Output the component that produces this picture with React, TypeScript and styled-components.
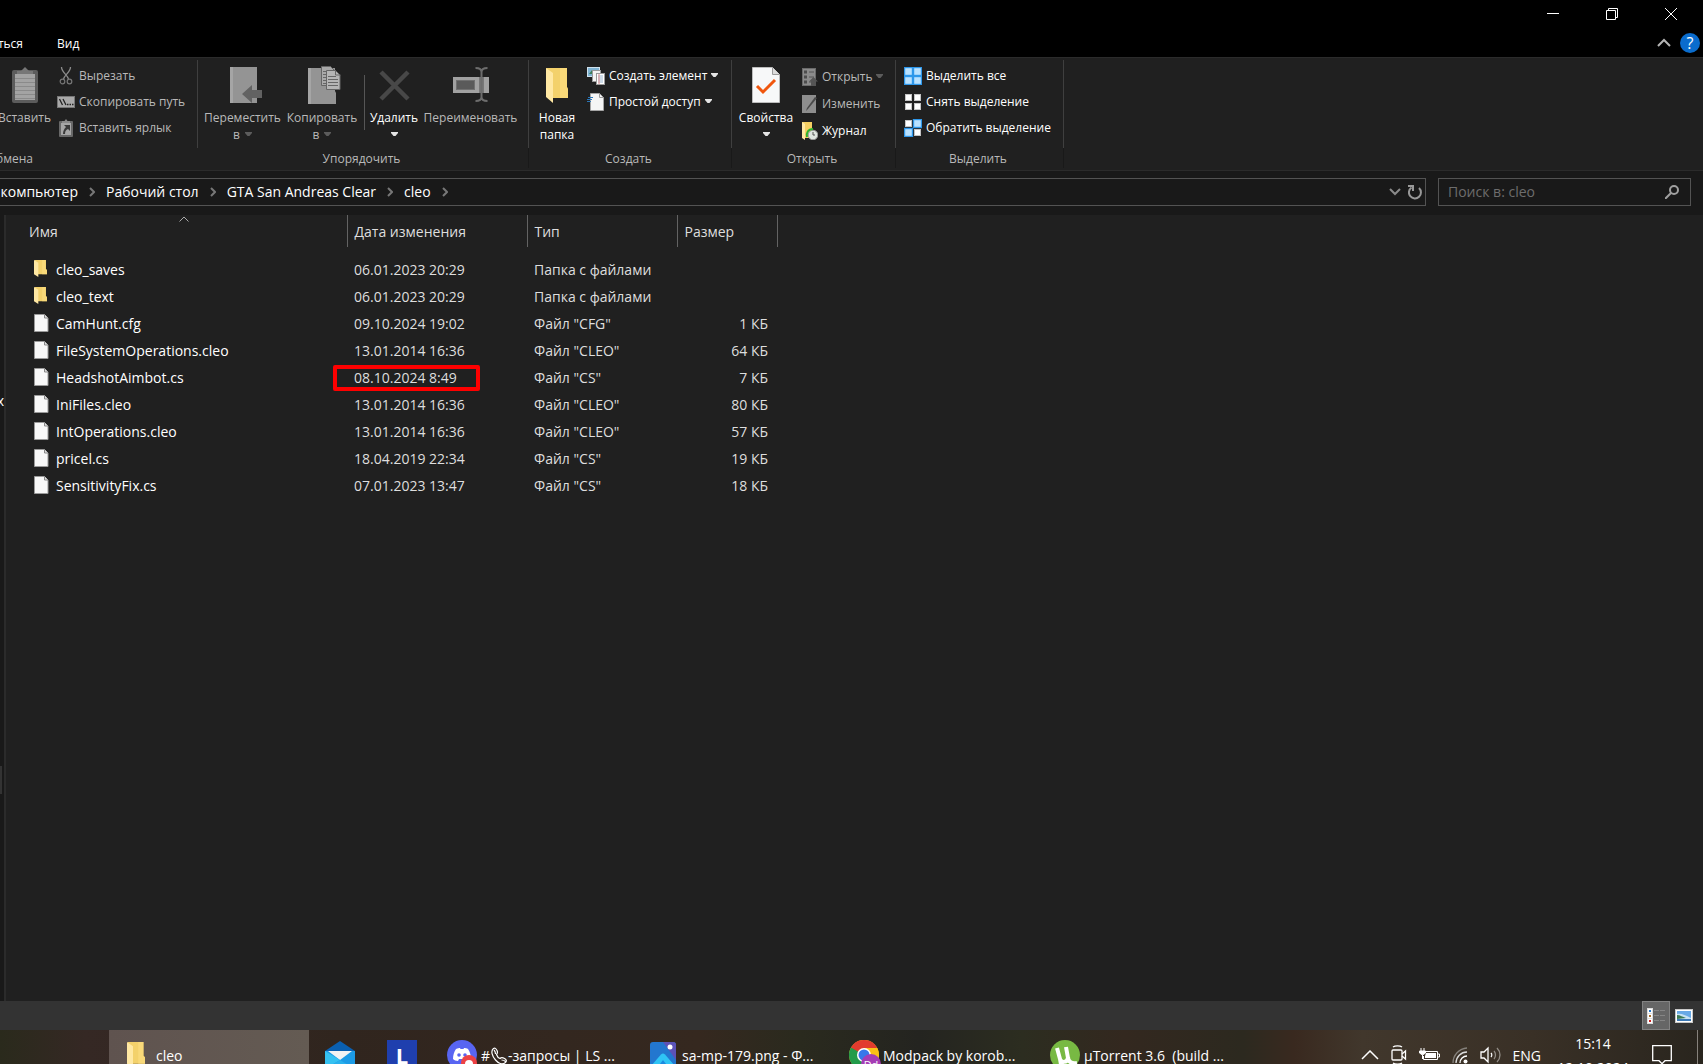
import React from 'react';
import styled, { createGlobalStyle, css } from 'styled-components';

const Global = createGlobalStyle`
  * { box-sizing: border-box; }
  html, body { margin: 0; height: 100%; background: #000; overflow: hidden; }
  body { font-family: "Open Sans", "Noto Sans", sans-serif; font-size: 14px; line-height: 20px; color: #fff; }
  button, input { font: inherit; color: inherit; background: none; border: 0; padding: 0; margin: 0; }
  button { cursor: default; white-space: nowrap; }
  svg { display: block; flex: none; }
`;

const Shell = styled.div`
  display: flex;
  flex-direction: column;
  height: 100vh;
`;

/* ---------- title bar and tabs ---------- */

const TitleBar = styled.header`
  display: flex;
  justify-content: space-between;
  flex: none;
  height: 57px;
  background: #000;
`;

const Tabs = styled.nav`
  display: flex;
  align-items: flex-end;
  gap: 34px;
  padding-bottom: 3px;
`;

const Tab = styled.button<{ $clipped?: boolean }>`
  height: 20px;
  font-size: 12px;
  ${p => p.$clipped && css`
    display: flex;
    justify-content: flex-end;
    width: 23px;
    overflow: hidden;
  `}
`;

const WindowControls = styled.div`
  display: flex;
  flex-direction: column;
  align-items: flex-end;
`;

const ControlRow = styled.div`
  display: flex;
  padding-right: 3px;
`;

const WindowButton = styled.button`
  display: grid;
  place-items: center;
  width: 59px;
  height: 28px;
`;

const HelpRow = styled.div`
  display: flex;
  align-items: center;
  gap: 9px;
  height: 30px;
  padding-right: 3px;
`;

/* ---------- ribbon ---------- */

const Ribbon = styled.section`
  display: flex;
  flex: none;
  height: 114px;
  background: #202020;
  border-top: 1px solid #2b2b2b;
  border-bottom: 1px solid #2b2b2b;
`;

const Group = styled.div<{ $width: number }>`
  display: flex;
  flex-direction: column;
  flex: none;
  width: ${p => p.$width}px;
  margin: 2px 0;
`;

const GroupBody = styled.div<{ $start: number }>`
  display: flex;
  align-items: flex-start;
  height: 89px;
  padding-left: ${p => p.$start}px;
  border-right: 1px solid #3f3f3f;
`;

const GroupLabel = styled.div`
  padding: 2px 3px 0 0;
  border-right: 1px solid #191919;
  font-size: 12px;
  line-height: 18px;
  color: #b9b9b9;
  text-align: center;
`;

const ClippedLabel = styled.div`
  display: flex;
  justify-content: flex-end;
  width: 33px;
  padding-top: 2px;
  overflow: hidden;
  font-size: 12px;
  line-height: 18px;
  color: #b9b9b9;
`;

const LargeButton = styled.button<{ $width: number; $dim?: boolean }>`
  display: flex;
  flex-direction: column;
  align-items: center;
  flex: none;
  width: ${p => p.$width}px;
  padding-top: 6px;
  font-size: 12px;
  line-height: 17px;
  color: ${p => (p.$dim ? '#b9b9b9' : '#fff')};
  & > svg:first-child { margin-bottom: 5px; }
`;

const SecondLine = styled.span`
  display: flex;
  align-items: center;
  gap: 5px;
  height: 17px;
`;

const SmallStack = styled.div<{ $start?: number; $top?: number; $gap?: number }>`
  display: flex;
  flex-direction: column;
  gap: ${p => p.$gap ?? 6}px;
  padding: ${p => p.$top ?? 6}px 0 0 ${p => p.$start ?? 0}px;
`;

const SmallButton = styled.button<{ $dim?: boolean }>`
  display: flex;
  align-items: center;
  gap: 4px;
  height: 20px;
  font-size: 12px;
  color: ${p => (p.$dim ? '#b9b9b9' : '#fff')};
`;

const Divider = styled.div`
  width: 1px;
  height: 55px;
  margin: 15px 3px 0 3px;
  background: #565656;
`;

/* ---------- address bar ---------- */

const AddressRow = styled.div`
  display: flex;
  flex: none;
  gap: 12px;
  height: 44px;
  padding: 7px 12px 9px 0;
  background: #191919;
`;

const AddressBox = styled.div`
  display: flex;
  align-items: center;
  flex: 1;
  min-width: 0;
  border: 1px solid #535353;
  border-left: 0;
`;

const Crumbs = styled.nav`
  display: flex;
  align-items: center;
  flex: 1;
  gap: 11px;
  padding-bottom: 1px;
  overflow: hidden;
`;

const Crumb = styled.button`
  height: 20px;
`;

const ClippedCrumb = styled(Crumb)`
  display: flex;
  justify-content: flex-end;
  width: 78px;
  overflow: hidden;
`;

const AddressButton = styled.button`
  display: grid;
  place-items: center;
  width: 20px;
  height: 26px;
`;

const SearchBox = styled.label`
  display: flex;
  align-items: center;
  width: 253px;
  padding: 0 11px 0 9px;
  border: 1px solid #535353;
`;

const SearchInput = styled.input`
  flex: 1;
  min-width: 0;
  outline: 0;
  &::placeholder { color: #6d6d6d; opacity: 1; }
`;

/* ---------- file list ---------- */

const Content = styled.main`
  display: flex;
  flex: 1;
  min-height: 0;
  background: #202020;
`;

const NavPane = styled.aside`
  display: flex;
  flex-direction: column;
  justify-content: space-between;
  flex: none;
  width: 6px;
  padding: 176px 0 207px;
  background: #191919;
  border-right: 2px solid #2b2b2b;
`;

const NavItem = styled.div`
  display: flex;
  justify-content: flex-end;
  width: 4px;
  overflow: hidden;
`;

const NavThumb = styled.div`
  width: 2px;
  height: 28px;
  background: #333;
`;

const FileTable = styled.table`
  table-layout: fixed;
  align-self: flex-start;
  width: 771px;
  border-collapse: collapse;
`;

const HeadCell = styled.th<{ $width: number; $pad?: number }>`
  position: relative;
  width: ${p => p.$width}px;
  height: 32px;
  padding: 2px 0 0 ${p => p.$pad ?? 7}px;
  border-right: 1px solid #636363;
  color: #dedede;
  font-weight: 400;
  text-align: left;
`;

const SortMark = styled.span`
  position: absolute;
  top: 1px;
  left: 173px;
`;

const Spacer = styled.tr`
  height: 9px;
`;

const Cell = styled.td<{ $right?: boolean }>`
  position: relative;
  height: 27px;
  padding: 0 ${p => (p.$right ? 9 : 0)}px 0 7px;
  color: #dedede;
  text-align: ${p => (p.$right ? 'right' : 'left')};
  white-space: nowrap;
`;

const NameCell = styled(Cell)`
  padding-left: 28px;
  color: #fff;
`;

const FileName = styled.div`
  display: flex;
  align-items: center;
`;

const IconSlot = styled.span`
  width: 22px;
  padding-bottom: 2px;
`;

const Highlight = styled.span`
  position: absolute;
  top: 1px;
  left: -14px;
  width: 147px;
  height: 26px;
  border: 4px solid #fe0000;
  border-radius: 2px;
`;

/* ---------- status bar ---------- */

const StatusBar = styled.footer`
  display: flex;
  justify-content: flex-end;
  flex: none;
  height: 29px;
  padding-right: 5px;
  background: #333;
`;

const ViewButton = styled.button<{ $active?: boolean }>`
  display: grid;
  place-items: center;
  width: 28px;
  height: 29px;
  ${p => p.$active && css`
    background: #666;
    border: 1px solid #838383;
  `}
`;

/* ---------- taskbar ---------- */

const TaskbarClip = styled.div`
  flex: none;
  height: 34px;
  overflow: hidden;
`;

const Taskbar = styled.div`
  display: flex;
  height: 50px;
  background: linear-gradient(90deg, #2a2a1c 0%, #352824 5%, #30251e 20%, #33271f 33%, #35281f 41%, #2a2a1e 47%, #242420 54%, #2c2d20 60%, #33281f 66%, #2c291f 73%, #39291f 76%, #41372c 80%, #393026 90%, #29251e 100%);
`;

const Task = styled.button<{ $width: number; $gap?: number; $start: number; $active?: boolean }>`
  display: flex;
  align-items: center;
  flex: none;
  gap: ${p => p.$gap ?? 4}px;
  width: ${p => p.$width}px;
  padding-left: ${p => p.$start}px;
  background: ${p => (p.$active ? 'linear-gradient(90deg, #5f534f, #645b53)' : 'none')};
`;

const TaskLabel = styled.span`
  display: flex;
  align-items: center;
  padding-top: 2px;
`;

const Tasks = styled.nav`
  display: flex;
  flex: 1;
  min-width: 0;
  padding-left: 109px;
`;

const Tray = styled.div`
  display: flex;
  align-items: center;
  flex: none;
  gap: 12px;
`;

const Clock = styled.time`
  display: flex;
  flex-direction: column;
  align-items: center;
  width: 80px;
  margin-right: 7px;
  padding-top: 1px;
  line-height: 24px;
`;

const ShowDesktop = styled.button`
  width: 6px;
  height: 50px;
  margin-left: 13px;
  border-left: 1px solid #87827c;
`;

/* ---------- icons ---------- */

const Caret = ({ dim }: { dim?: boolean }) => (
  <svg width="7" height="6" viewBox="0 0 7 6"><path d="M0 0h7v1L4.500 4h-2L0 1z" fill={dim ? '#5c5c5c' : '#e4e4e4'} /></svg>
);

const Paste = () => (
  <svg width="28" height="38" viewBox="0 0 28 38">
    <rect x="1" y="4" width="26" height="33" rx="2" fill="#5c5c5c" />
    <rect x="4" y="8" width="20" height="26" fill="#a3a3a3" />
    <path d="M4 12.500h20M4 16.500h20M4 20.500h20M4 24.500h20M4 28.500h20M4 32.500h20" stroke="#8a8a8a" />
    <path d="M6 8V5h4l4-4 4 4h4v3z" fill="#777" />
  </svg>
);

const Scissors = () => (
  <svg width="18" height="18" viewBox="0 0 18 18" fill="none" stroke="#777">
    <path d="M4.500 0c0 5 6 8 7 12M13.500 0c0 5-6 8-7 12" stroke="#8b8b8b" strokeWidth="1.300" />
    <circle cx="5.500" cy="14.500" r="2.300" strokeWidth="1.200" /><circle cx="12.500" cy="14.500" r="2.300" strokeWidth="1.200" />
  </svg>
);

const CopyPath = () => (
  <svg width="18" height="18" viewBox="0 0 18 18">
    <rect x="0.500" y="3.500" width="17" height="11" fill="#a9a9a9" stroke="#777" />
    <path d="M2.500 6l3 6M6 6l3 6M10 11.500h1.500M12.500 11.500H14M15 11.500h1.500" stroke="#222" strokeWidth="1.300" />
  </svg>
);

const PasteLink = () => (
  <svg width="18" height="18" viewBox="0 0 18 18">
    <rect x="2" y="2" width="14" height="16" rx="1" fill="#686868" />
    <rect x="4" y="4" width="10" height="12" fill="#a6a6a6" />
    <path d="M5 4V2h2.500L9 0l1.500 2H13v2z" fill="#8a8a8a" />
    <path d="M7 6h6v6l-2-2c-2 1-3 2-3 5H6c0-3 1-5 3-7z" fill="#3a3a3a" />
  </svg>
);

const MoveTo = () => (
  <svg width="40" height="38" viewBox="-6 0 40 38">
    <path d="M1 1h27v36H1z" fill="#949494" /><path d="M1 1h3v36H1z" fill="#a5a5a5" />
    <path d="M13 28l10-9v5h10v8H23v5z" fill="#626262" />
  </svg>
);

const CopyTo = () => (
  <svg width="38" height="38" viewBox="-4 0 38 38">
    <path d="M1 2h27v23l1 2v11H1z" fill="#949494" /><path d="M1 2h3v36H1z" fill="#a5a5a5" />
    <path d="M14.500.500h9l4 4v15h-13z" fill="#a9a9a9" stroke="#666" />
    <path d="M16 5.500h7M16 8.500h4M16 11.500h4M16 14.500h4M16 17.500h4" stroke="#666" />
    <path d="M19.500 4.500h9l4.500 4.500v14.500H19.500z" fill="#b5b5b5" stroke="#666" />
    <path d="M28.500 4v5h5M21 10.500h8M21 13.500h10M21 16.500h10M21 19.500h10" fill="none" stroke="#666" />
  </svg>
);

const DeleteX = () => (
  <svg width="34" height="38" viewBox="0 0 34 38">
    <path d="M4 6l27 27M31 6L4 33" stroke="#484848" strokeWidth="4.500" />
  </svg>
);

const Rename = () => (
  <svg width="38" height="38" viewBox="0 0 38 38">
    <rect x="1" y="11" width="36" height="16" fill="#a1a1a1" />
    <rect x="4.500" y="14.500" width="18" height="9" fill="#5a5a5a" stroke="#707070" />
    <path d="M27 11h5v16h-5z" fill="#777" /><path d="M29.500 5v28M23.500 2c4 0 6 1 6 4 0-3 2-4 6-4M23.500 35c4 0 6-1 6-4 0 3 2 4 6 4" fill="none" stroke="#6d6d6d" strokeWidth="2" />
  </svg>
);

const FolderIcon = ({ w, h }: { w: number; h: number }) => (
  <svg width={w} height={h} viewBox="0 0 24 36" preserveAspectRatio="none">
    <path d="M1 0h21v19l2 2v9H7z" fill="#f3d16b" />
    <path d="M15 0h7v19l2 2v9h-9z" fill="#fbdd7f" opacity=".7" />
    <path d="M0 0l8 6v30l-8-6z" fill="#ffe8a3" />
  </svg>
);

const NewFolder = () => (
  <svg width="24" height="38" viewBox="0 0 24 38">
    <path d="M1 2h21v19l1 2v9H8z" fill="#f3d16b" />
    <path d="M15 2h7v19l1 2v9h-8z" fill="#fbdd7f" opacity=".7" />
    <path d="M1 2l7 5v30l-7-6z" fill="#ffe8a3" />
  </svg>
);

const NewItem = () => (
  <svg width="18" height="18" viewBox="0 0 18 18">
    <rect x="0.500" y="0.500" width="12" height="9" fill="#7fb3d3" stroke="#d0e2ee" />
    <path d="M2 7l3-4 3 4z" fill="#3e7e5a" />
    <rect x="5.500" y="3.500" width="8" height="11" fill="#f4f4f4" stroke="#999" />
    <rect x="9.500" y="6.500" width="8" height="11" fill="#fff" stroke="#999" />
    <path d="M11 9h5M11 11h5M11 13h5M11 15h5" stroke="#9bb7cf" /><path d="M12 7v10" stroke="#d88" />
  </svg>
);

const EasyAccess = () => (
  <svg width="18" height="18" viewBox="0 0 18 18">
    <path d="M3.500.500h9l4 4v13h-13z" fill="#f5f5f5" stroke="#a5a5a5" />
    <path d="M12.500.500v4h4" fill="none" stroke="#999" />
    <path d="M1 4.500h5M0 6.500h5M0 8.500h4" stroke="#2a76b8" />
  </svg>
);

const Properties = () => (
  <svg width="28" height="38" viewBox="0 0 28 38">
    <path d="M.500 1.500h20l7 7v28H.500z" fill="#f7f8f9" stroke="#bcbcbc" />
    <path d="M20.500 1.500v7h7" fill="#dcdcdc" stroke="#999" />
    <path d="M5 20l6 6 12-12" fill="none" stroke="#f0560e" strokeWidth="3" />
  </svg>
);

const OpenIcon = () => (
  <svg width="16" height="18" viewBox="0 0 16 18">
    <rect x="0.500" y="0.500" width="13" height="17" fill="#8b8b8b" stroke="#6a6a6a" />
    <path d="M2 2.500h3v3H2zM2 7.500h3v3H2zM2 12.500h3v3H2z" fill="#4d4d4d" />
    <path d="M7 4h5M7 9h5M7 14h3" stroke="#555" />
    <path d="M11.500 9l4.500 4.500h-2V18H9v-4.500H7z" fill="#555" />
  </svg>
);

const EditIcon = () => (
  <svg width="16" height="18" viewBox="0 0 16 18">
    <path d="M0 0h14v18H0z" fill="#8e8e8e" /><path d="M15 3L6 14l-2 2 1-3 8-11z" fill="#4a4a4a" />
  </svg>
);

const HistoryIcon = () => (
  <svg width="16" height="18" viewBox="0 0 16 18">
    <path d="M0 0h10v16H3z" fill="#f5cf62" /><path d="M0 0l3 2v16l-3-2z" fill="#ffe8a3" />
    <circle cx="11" cy="13" r="4.800" fill="#dfe5df" stroke="#999" />
    <path d="M11 10v3h2" fill="none" stroke="#555" /><path d="M5 15c-1-4 1-8 6-8" fill="none" stroke="#2eb32e" strokeWidth="2" />
  </svg>
);

const SelectGrid = ({ on }: { on: number[] }) => (
  <svg width="18" height="18" viewBox="0 0 18 18">
    {[[0, 0], [9, 0], [0, 9], [9, 9]].map(([x, y], i) => (
      on.includes(i)
        ? <rect key={i} x={x + 0.5} y={y + 0.5} width="8" height="8" fill="#b8e1ff" stroke="#2e97ea" strokeWidth="1.400" />
        : <rect key={i} x={x + 1.5} y={y + 1.5} width="6" height="6" fill="#fff" stroke="#c4c4c4" />
    ))}
  </svg>
);

const Chevron = ({ d, w = 12, h = 12, c = '#8a8a8a', s = 2 }: { d: string; w?: number; h?: number; c?: string; s?: number }) => (
  <svg width={w} height={h} viewBox={`0 0 ${w} ${h}`}><path d={d} fill="none" stroke={c} strokeWidth={s} /></svg>
);

const CrumbArrow = () => <Chevron w={6} h={10} d="M1 1l4 4-4 4" s={2} c="#777" />;

const FileIcon = () => (
  <svg width="15" height="18" viewBox="0 0 15 18">
    <path d="M.500.500h10l3.500 3.500v13.500H.500z" fill="#f8f8f8" stroke="#9a9a9a" />
    <path d="M10.500.500v3.500h3.500" fill="#ddd" stroke="#888" />
  </svg>
);

const DetailsIcon = () => (
  <svg width="18" height="16" viewBox="0 0 18 16">
    <path d="M0 0h6v16H0z" fill="#ddd" />
    <path d="M1 1h4v4H1zM1 6h4v4H1zM1 11h4v4H1z" fill="#fff" />
    <path d="M2 2h2v2H2z" fill="#2878c8" /><path d="M2 7h2v2H2z" fill="#a56a28" /><path d="M2 12h2v2H2z" fill="#d02020" />
    <path d="M7 2.500h5M13 2.500h5M7 7.500h5M13 7.500h5M7 12.500h5M13 12.500h5" stroke="#858585" />
  </svg>
);

const ThumbIcon = () => (
  <svg width="18" height="14" viewBox="0 0 18 14">
    <rect width="18" height="14" fill="#c8c8c8" /><rect x="1" y="1" width="16" height="12" fill="#fff" />
    <rect x="2" y="2" width="14" height="10" fill="#68a9e6" /><path d="M2 5c4-1 8 1 14 4v3H2z" fill="#c6e2f4" />
    <path d="M2 6c3 0 6 2 9 3l-9 1z" fill="#3c7a55" /><path d="M2 10h14v2H2z" fill="#3a78b6" />
  </svg>
);

const MailIcon = () => (
  <svg width="30" height="30" viewBox="0 0 30 30">
    <path d="M0 11L15 1l15 10z" fill="#0a5fb0" /><path d="M0 11h30v18H0z" fill="#1c9be6" />
    <path d="M3 11h24l-12 9z" fill="#f3f3f3" /><path d="M0 11l15 9L0 29z" fill="#35c1f1" /><path d="M0 29l15-9 15 9z" fill="#28b0ec" />
  </svg>
);

const LetterBox = styled.span`
  display: grid;
  place-items: center;
  width: 30px;
  height: 30px;
  background: #1f3fae;
  font-size: 22px;
  font-weight: 700;
  line-height: 24px;
`;

const DiscordIcon = () => (
  <svg width="30" height="30" viewBox="0 0 30 30">
    <circle cx="15" cy="15" r="15" fill="#5865f2" />
    <path d="M9 9c2-1 3-1 4-1l.500 1h3l.500-1c1 0 3 0 4 1 2 3 3 6 3 10-1 1-3 2-5 2l-1-2h-6l-1 2c-2 0-4-1-5-2 0-4 1-7 3-10z" fill="#fff" />
    <circle cx="12" cy="15" r="1.800" fill="#5865f2" /><circle cx="18" cy="15" r="1.800" fill="#5865f2" />
    <circle cx="22" cy="23" r="8" fill="#ed4245" /><circle cx="22" cy="24" r="4" fill="#fff" />
  </svg>
);

const PhoneIcon = () => (
  <svg width="18" height="18" viewBox="0 0 18 18">
    <path d="M3.500 1.500C5 .500 6 1.500 7 3.500s1 2.500-.500 4c.500 1.500 2 3.500 3.500 4 1.500-1.500 2.500-1.200 4.500 0s2.500 2.500 1 4c-3 2.500-7 1-10-2.500C2 9 .500 4 3.500 1.500zM4 3c1 1 1.500 2.500 1.500 4M11.500 13c1.500 0 3 .500 4 1.500" fill="none" stroke="#fff" strokeWidth="1.200" />
  </svg>
);

const PhotosIcon = () => (
  <svg width="26" height="26" viewBox="0 0 26 26">
    <rect width="26" height="26" rx="3" fill="#2377cf" /><path d="M13 0h10a3 3 0 013 3v15z" fill="#5c52b8" />
    <path d="M1 24L11 12.500q2-2 4 0L25 24v2H1z" fill="#2fc4f5" /><path d="M7 26l6-8 6 8z" fill="#1b8ae0" /><circle cx="20" cy="5" r="2.500" fill="#fff" />
  </svg>
);

const ChromeIcon = () => (
  <svg width="32" height="30" viewBox="0 0 32 30">
    <circle cx="15" cy="15" r="15" fill="#fbc116" />
    <path d="M15 15h13v-7.500A15 15 0 002 7.500L9 19z" fill="#e23b2e" />
    <path d="M15 15L2 7.500A15 15 0 0014 30z" fill="#239b4a" /><path d="M15 8h13.300A15 15 0 0115 30z" fill="#fbc116" />
    <circle cx="15" cy="15" r="7" fill="#fff" /><circle cx="15" cy="15" r="5.500" fill="#3878ea" />
    <circle cx="22" cy="24" r="10" fill="#a53db5" />
    <text x="22" y="29" fontSize="11" fill="#fff" textAnchor="middle">Dd</text>
  </svg>
);

const TorrentIcon = () => (
  <svg width="30" height="30" viewBox="0 0 30 30">
    <circle cx="15" cy="15" r="15" fill="#78b943" />
    <path d="M7 8l3 11c1 4 7 4 8-1L16 7M18 17c0 5 4 7 9 6M10 19l2 11" fill="none" stroke="#fff" strokeWidth="4" />
  </svg>
);

const CameraIcon = () => (
  <svg width="16" height="20" viewBox="0 0 16 20" fill="none" stroke="#fff" strokeWidth="1.300">
    <rect x="1" y="5" width="10" height="10" rx="1" /><path d="M11 9l3.500-3v8L11 11M2 2c2-1.500 7-1.500 9 0M2 18c2 1.500 7 1.500 9 0" />
  </svg>
);

const BatteryIcon = () => (
  <svg width="21" height="16" viewBox="0 0 21 16">
    <path d="M6 4.500h12.500v8H4.500V9M18.500 7h2v3h-2" fill="none" stroke="#fff" /><path d="M7 6h10v5H6V9z" fill="#fff" />
    <path d="M2 1v3M5 1v3M.500 4h6v2L3.500 8 .500 6zM3.500 8v4" fill="#fff" stroke="#fff" />
  </svg>
);

const WifiIcon = () => (
  <svg width="16" height="18" viewBox="0 0 16 18" fill="none" strokeWidth="1.300">
    <path d="M1 17A15 15 0 0115 2" stroke="#85817b" /><path d="M4 17A11 11 0 0115 6" stroke="#ddd" /><path d="M8 17a7 7 0 017-7" stroke="#fff" />
    <circle cx="13.500" cy="15.500" r="2" fill="#fff" />
  </svg>
);

const SoundIcon = () => (
  <svg width="21" height="18" viewBox="0 0 21 18" fill="none" strokeWidth="1.300">
    <path d="M1 6h3l4-4v14l-4-4H1z" stroke="#fff" /><path d="M11 7c1 1 1 3 0 4" stroke="#fff" />
    <path d="M14 5c2 2 2 6 0 8M17 2c4 4 4 10 0 14" stroke="#928d87" />
  </svg>
);

const NoteIcon = () => (
  <svg width="20" height="20" viewBox="0 0 20 20"><path d="M.700.700h18.600v15H13l-3 3-3-3H.700z" fill="none" stroke="#fff" strokeWidth="1.300" /></svg>
);

const files = [
  { name: 'cleo_saves', date: '06.01.2023 20:29', type: 'Папка с файлами', size: '', folder: true },
  { name: 'cleo_text', date: '06.01.2023 20:29', type: 'Папка с файлами', size: '', folder: true },
  { name: 'CamHunt.cfg', date: '09.10.2024 19:02', type: 'Файл "CFG"', size: '1 КБ' },
  { name: 'FileSystemOperations.cleo', date: '13.01.2014 16:36', type: 'Файл "CLEO"', size: '64 КБ' },
  { name: 'HeadshotAimbot.cs', date: '08.10.2024 8:49', type: 'Файл "CS"', size: '7 КБ', marked: true },
  { name: 'IniFiles.cleo', date: '13.01.2014 16:36', type: 'Файл "CLEO"', size: '80 КБ' },
  { name: 'IntOperations.cleo', date: '13.01.2014 16:36', type: 'Файл "CLEO"', size: '57 КБ' },
  { name: 'pricel.cs', date: '18.04.2019 22:34', type: 'Файл "CS"', size: '19 КБ' },
  { name: 'SensitivityFix.cs', date: '07.01.2023 13:47', type: 'Файл "CS"', size: '18 КБ' },
];

export default function App() {
  return (
    <Shell>
      <Global />
      <TitleBar>
        <Tabs>
          <Tab $clipped>ться</Tab>
          <Tab>Вид</Tab>
        </Tabs>
        <WindowControls>
          <ControlRow>
            <WindowButton aria-label="Свернуть"><Chevron d="M0 5.500h12" c="#fff" s={1} /></WindowButton>
            <WindowButton aria-label="Восстановить"><Chevron d="M.5 2.500h9v9h-9zM2.500 2.500v-2h9v9h-2" c="#fff" s={1} /></WindowButton>
            <WindowButton aria-label="Закрыть"><Chevron d="M0 0l12 12M12 0L0 12" c="#fff" s={1} /></WindowButton>
          </ControlRow>
          <HelpRow>
            <button aria-label="Свернуть ленту"><Chevron w={14} h={9} d="M1 8l6-6 6 6" c="#b5b5b5" s={2} /></button>
            <button aria-label="Справка">
              <svg width="20" height="20" viewBox="0 0 20 20">
                <circle cx="10" cy="10" r="10" fill="#0a6ccd" />
                <text x="10" y="16" fontSize="16" fill="#fff" textAnchor="middle">?</text>
              </svg>
            </button>
          </HelpRow>
        </WindowControls>
      </TitleBar>

      <Ribbon>
        <Group $width={198}>
          <GroupBody $start={0}>
            <LargeButton $width={49} $dim><Paste />Вставить</LargeButton>
            <SmallStack $start={8}>
              <SmallButton $dim><Scissors />Вырезать</SmallButton>
              <SmallButton $dim><CopyPath />Скопировать путь</SmallButton>
              <SmallButton $dim><PasteLink />Вставить ярлык</SmallButton>
            </SmallStack>
          </GroupBody>
          <ClippedLabel>бмена</ClippedLabel>
        </Group>
        <Group $width={331}>
          <GroupBody $start={4}>
            <LargeButton $width={81} $dim><MoveTo />Переместить<SecondLine>в <Caret dim /></SecondLine></LargeButton>
            <LargeButton $width={78} $dim><CopyTo />Копировать<SecondLine>в <Caret dim /></SecondLine></LargeButton>
            <Divider />
            <LargeButton $width={52}><DeleteX />Удалить<SecondLine><Caret /></SecondLine></LargeButton>
            <LargeButton $width={101} $dim><Rename />Переименовать</LargeButton>
          </GroupBody>
          <GroupLabel>Упорядочить</GroupLabel>
        </Group>
        <Group $width={203}>
          <GroupBody $start={0}>
            <LargeButton $width={56}><NewFolder />Новая<SecondLine>папка</SecondLine></LargeButton>
            <SmallStack $start={2}>
              <SmallButton><NewItem />Создать элемент<Caret /></SmallButton>
              <SmallButton><EasyAccess />Простой доступ<Caret /></SmallButton>
            </SmallStack>
          </GroupBody>
          <GroupLabel>Создать</GroupLabel>
        </Group>
        <Group $width={164}>
          <GroupBody $start={4}>
            <LargeButton $width={60}><Properties />Свойства<SecondLine><Caret /></SecondLine></LargeButton>
            <SmallStack $start={6} $top={7} $gap={7}>
              <SmallButton $dim><OpenIcon />Открыть <Caret dim /></SmallButton>
              <SmallButton $dim><EditIcon />Изменить</SmallButton>
              <SmallButton><HistoryIcon />Журнал</SmallButton>
            </SmallStack>
          </GroupBody>
          <GroupLabel>Открыть</GroupLabel>
        </Group>
        <Group $width={168}>
          <GroupBody $start={8}>
            <SmallStack>
              <SmallButton><SelectGrid on={[0, 1, 2, 3]} />Выделить все</SmallButton>
              <SmallButton><SelectGrid on={[]} />Снять выделение</SmallButton>
              <SmallButton><SelectGrid on={[1, 2]} />Обратить выделение</SmallButton>
            </SmallStack>
          </GroupBody>
          <GroupLabel>Выделить</GroupLabel>
        </Group>
      </Ribbon>

      <AddressRow>
        <AddressBox>
          <Crumbs>
            <ClippedCrumb>компьютер</ClippedCrumb><CrumbArrow />
            <Crumb>Рабочий стол</Crumb><CrumbArrow />
            <Crumb>GTA San Andreas Clear</Crumb><CrumbArrow />
            <Crumb>cleo</Crumb><CrumbArrow />
          </Crumbs>
          <AddressButton aria-label="История"><Chevron w={12} h={8} d="M1 1l5 5 5-5" /></AddressButton>
          <AddressButton aria-label="Обновить">
            <svg width="14" height="16" viewBox="0 0 14 16"><path d="M3.500 3.500A6 6 0 1011 4M0 2h5v5" fill="none" stroke="#999" strokeWidth="2" /></svg>
          </AddressButton>
        </AddressBox>
        <SearchBox>
          <SearchInput placeholder="Поиск в: cleo" aria-label="Поиск" />
          <svg width="14" height="14" viewBox="0 0 14 14" fill="none" stroke="#a0a0a0" strokeWidth="2"><circle cx="9" cy="5" r="4" /><path d="M6 8l-6 6" /></svg>
        </SearchBox>
      </AddressRow>

      <Content>
        <NavPane><NavItem>х</NavItem><NavThumb /></NavPane>
        <FileTable>
          <thead>
            <tr>
              <HeadCell $width={341} $pad={23}>Имя<SortMark><Chevron w={10} h={6} d="M.5 5.500L5 1l4.500 4.500" s={1} c="#aaa" /></SortMark></HeadCell>
              <HeadCell $width={180}>Дата изменения</HeadCell>
              <HeadCell $width={150}>Тип</HeadCell>
              <HeadCell $width={100}>Размер</HeadCell>
            </tr>
          </thead>
          <tbody>
            <Spacer />
            {files.map(f => (
              <tr key={f.name}>
                <NameCell><FileName><IconSlot>{f.folder ? <FolderIcon w={13} h={17} /> : <FileIcon />}</IconSlot>{f.name}</FileName></NameCell>
                <Cell>{f.date}{f.marked && <Highlight />}</Cell>
                <Cell>{f.type}</Cell>
                <Cell $right>{f.size}</Cell>
              </tr>
            ))}
          </tbody>
        </FileTable>
      </Content>

      <StatusBar>
        <ViewButton $active aria-label="Таблица"><DetailsIcon /></ViewButton>
        <ViewButton aria-label="Крупные значки"><ThumbIcon /></ViewButton>
      </StatusBar>

      <TaskbarClip>
        <Taskbar>
          <Tasks>
            <Task $width={200} $start={18} $gap={11} $active><FolderIcon w={18} h={26} /><TaskLabel>cleo</TaskLabel></Task>
            <Task $width={62} $start={16} aria-label="Почта"><MailIcon /></Task>
            <Task $width={62} $start={16}><LetterBox>L</LetterBox></Task>
            <Task $width={201} $start={14}><DiscordIcon /><TaskLabel>#<PhoneIcon />-запросы | LS ...</TaskLabel></Task>
            <Task $width={201} $start={16} $gap={6}><PhotosIcon /><TaskLabel>sa-mp-179.png - Ф...</TaskLabel></Task>
            <Task $width={201} $start={14} $gap={2}><ChromeIcon /><TaskLabel>Modpack by korob...</TaskLabel></Task>
            <Task $width={201} $start={14}><TorrentIcon /><TaskLabel>µTorrent 3.6&nbsp; (build ...</TaskLabel></Task>
          </Tasks>
          <Tray>
            <Chevron w={18} h={10} d="M1 9l8-8 8 8" s={1.5} c="#fff" />
            <CameraIcon /><BatteryIcon /><WifiIcon /><SoundIcon />
            <TaskLabel>ENG</TaskLabel>
            <Clock><span>15:14</span><span>12.10.2024</span></Clock>
            <NoteIcon />
            <ShowDesktop aria-label="Показать рабочий стол" />
          </Tray>
        </Taskbar>
      </TaskbarClip>
    </Shell>
  );
}
